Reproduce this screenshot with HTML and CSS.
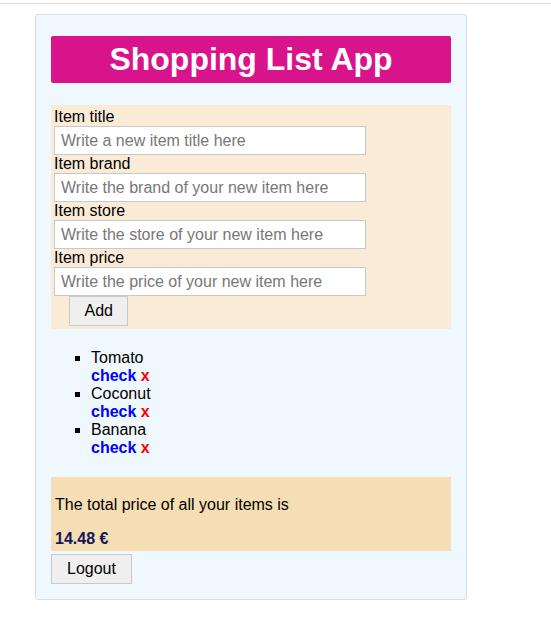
FILE: index.html
```html
<!DOCTYPE html>
<html lang="en">
<head>
<meta charset="utf-8">
<title>Shopping List App</title>
<link rel="stylesheet" href="styles.css">
</head>
<body>
<div class="topbar"></div>
<div class="card">
  <h1 class="title">Shopping List App</h1>
  <form class="item-form">
    <label class="field-label">Item title</label>
    <input class="field-input" type="text" placeholder="Write a new item title here">
    <label class="field-label">Item brand</label>
    <input class="field-input" type="text" placeholder="Write the brand of your new item here">
    <label class="field-label">Item store</label>
    <input class="field-input" type="text" placeholder="Write the store of your new item here">
    <label class="field-label">Item price</label>
    <input class="field-input" type="text" placeholder="Write the price of your new item here">
    <button class="btn btn-add" type="button">Add</button>
  </form>
  <ul class="items">
    <li class="item"><div class="item-name">Tomato</div><div class="item-actions"><span class="check">check</span> <span class="remove">x</span></div></li>
    <li class="item"><div class="item-name">Coconut</div><div class="item-actions"><span class="check">check</span> <span class="remove">x</span></div></li>
    <li class="item"><div class="item-name">Banana</div><div class="item-actions"><span class="check">check</span> <span class="remove">x</span></div></li>
  </ul>
  <div class="total">
    <p class="total-text">The total price of all your items is</p>
    <div class="total-value">14.48 €</div>
  </div>
  <button class="btn btn-logout" type="button">Logout</button>
</div>
</body>
</html>
```
FILE: styles.css
```css
html, body {
  margin: 0;
  padding: 0;
  background: #fff;
}
body {
  font-family: "Liberation Sans", Arial, sans-serif;
  font-size: 16px;
  color: #000;
}
.topbar {
  height: 3px;
  border-bottom: 1px solid #dcdcdc;
}
.card {
  box-sizing: border-box;
  width: 432px;
  margin: 10px 0 0 35px;
  padding: 0 15px 15px;
  background: #f0f8ff;
  border: 1px solid #dadde0;
  border-radius: 3px;
}
.title {
  margin: 21px 0 21.5px;
  padding: 5px 0;
  font-size: 32px;
  line-height: 37px;
  font-weight: bold;
  text-align: center;
  color: #fff;
  background: #d9138b;
  border-radius: 2px;
}
.item-form {
  margin: 0;
  padding: 3px;
  background: #faebd7;
}
.field-label {
  display: block;
  line-height: 18px;
}
.field-input {
  display: block;
  box-sizing: border-box;
  width: 312px;
  height: 29px;
  margin: 0;
  padding: 2px 6px 0;
  font-family: "Liberation Sans", Arial, sans-serif;
  font-size: 16px;
  color: #000;
  background: #fff;
  border: 1px solid #c8c8c8;
  border-radius: 0;
  outline: none;
}
.field-input::placeholder {
  color: #777;
}
.btn {
  box-sizing: border-box;
  height: 30px;
  padding: 0 15px;
  font-family: "Liberation Sans", Arial, sans-serif;
  font-size: 16px;
  color: #000;
  background: #efefef;
  border: 1px solid #c9c9c9;
  border-radius: 0;
  line-height: 18px;
}
.btn-add {
  display: block;
  margin: 0 0 0 15px;
  padding: 0 14.5px;
}
.items {
  margin: 20px 0 20px;
  padding-left: 40px;
  list-style: square;
}
.item {
  line-height: 18px;
}
.item-actions {
  font-weight: bold;
}
.check {
  color: #0000ff;
}
.remove {
  color: #ff0000;
}
.total {
  padding: 3px 4px;
  background: #f5deb3;
}
.total-text {
  margin: 16px 0;
  line-height: 18px;
}
.total-value {
  line-height: 18px;
  font-weight: bold;
  color: #16165c;
}
.btn-logout {
  display: block;
  margin-top: 3px;
}
```
